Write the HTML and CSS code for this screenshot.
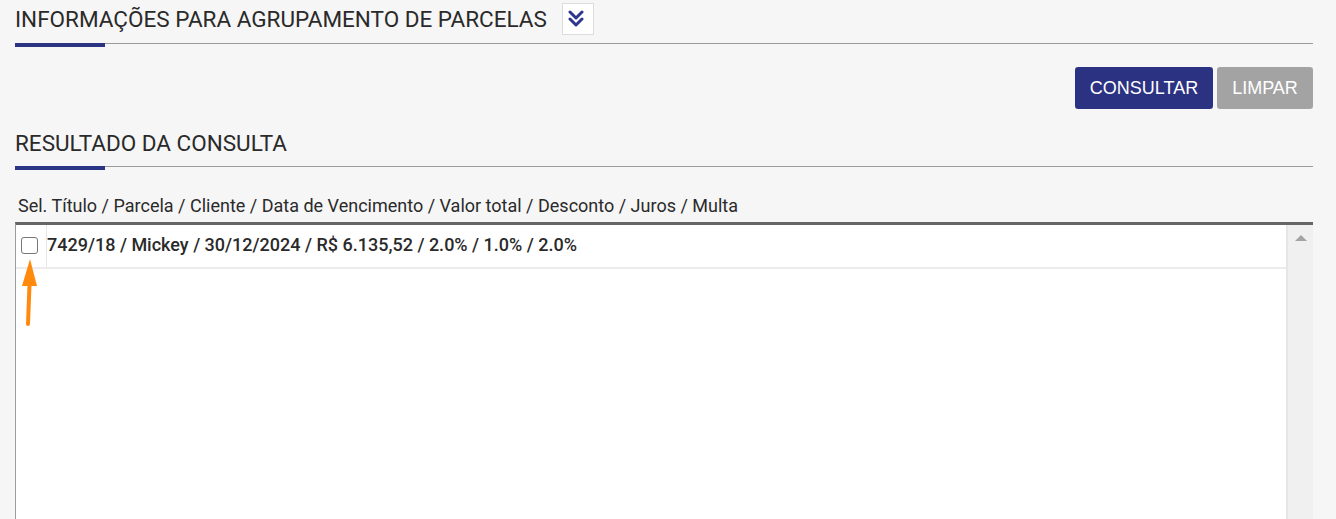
FILE: index.html
```html
<!DOCTYPE html>
<html lang="pt-BR">
<head>
<meta charset="utf-8">
<title>Agrupamento de Parcelas</title>
<link rel="stylesheet" href="styles.css">
</head>
<body>
<div class="page">
  <section class="section">
    <div class="section-head">
      <h2 class="section-title">INFORMAÇÕES PARA AGRUPAMENTO DE PARCELAS</h2>
      <button class="toggle" type="button" aria-label="Expandir">
        <svg width="16" height="18" viewBox="0 0 16 18" fill="none" stroke="#2e3790" stroke-width="3" stroke-linecap="round" stroke-linejoin="round">
          <polyline points="2,2 8,8 14,2"/>
          <polyline points="2,9 8,15 14,9"/>
        </svg>
      </button>
    </div>
    <div class="rule"><span class="rule-accent"></span><span class="rule-line"></span></div>
  </section>

  <div class="actions">
    <button class="btn btn-primary" type="button">CONSULTAR</button>
    <button class="btn btn-disabled" type="button">LIMPAR</button>
  </div>

  <section class="section results">
    <div class="section-head small">
      <h2 class="section-title">RESULTADO DA CONSULTA</h2>
    </div>
    <div class="rule"><span class="rule-accent"></span><span class="rule-line"></span></div>

    <div class="list-label">Sel. Título / Parcela / Cliente / Data de Vencimento / Valor total / Desconto / Juros / Multa</div>
    <div class="list-box">
      <div class="list-rows">
        <div class="row">
          <div class="cell-check"><span class="checkbox"></span></div>
          <div class="cell-text">7429/18 / Mickey / 30/12/2024 / R$ 6.135,52 / 2.0% / 1.0% / 2.0%</div>
        </div>
      </div>
      <div class="scrollbar"><span class="scroll-up"></span></div>
    </div>
    <svg class="pointer" width="20" height="70" viewBox="0 0 20 70">
      <path d="M9.5 26 L8 65" stroke="#ff8a0d" stroke-width="4" stroke-linecap="round" fill="none"/>
      <polygon points="10,0 2,27 17,27" fill="#ff8a0d"/>
    </svg>
  </section>
</div>
</body>
</html>
```

FILE: styles.css
```css
* { box-sizing: border-box; }
html, body { margin: 0; padding: 0; }
body {
  background: #f6f6f6;
  font-family: Roboto, "Liberation Sans", sans-serif;
  color: #333;
  overflow: hidden;
}
.page {
  padding: 3px 23px 0 15px;
}
.section { position: relative; }
.section-head {
  display: flex;
  align-items: center;
  gap: 15px;
  height: 32px;
}
.section-head.small { height: 26px; }
.section-title {
  margin: 0;
  font-size: 22.5px;
  font-weight: 400;
  color: #2a2a2a;
  line-height: 26px;
}
.toggle {
  width: 32px;
  height: 32px;
  padding: 0 0 0 5px;
  margin: 0;
  border: 1px solid #dcdcdc;
  background: #fff;
  display: flex;
  align-items: center;
  justify-content: flex-start;
}
.rule {
  display: flex;
  align-items: flex-start;
  margin-top: 8px;
}
.results .rule { margin-top: 10px; }
.rule-accent {
  width: 90px;
  height: 4px;
  background: #2b3383;
}
.rule-line {
  flex: 1;
  height: 1px;
  background: #9c9c9c;
}
.actions {
  display: flex;
  justify-content: flex-end;
  gap: 4px;
  margin-top: 20px;
}
.btn {
  height: 42px;
  border: none;
  border-radius: 3px;
  color: #fff;
  font-family: "Liberation Sans", Arial, sans-serif;
  font-size: 18px;
  padding: 0;
}
.btn-primary { background: #2b3282; width: 138px; }
.btn-disabled { background: #a3a3a3; width: 96px; }
.results { margin-top: 21px; }
.list-label {
  margin-top: 25px;
  padding-left: 3px;
  font-size: 18px;
  line-height: 22px;
  height: 27px;
  color: #2a2a2a;
}
.list-box {
  display: flex;
  height: 320px;
  border-top: 3px solid #666;
  border-left: 1px solid #9c9c9c;
  background: #fff;
}
.list-rows {
  flex: 1;
  border-right: 2px solid #e6e6e6;
}
.row {
  display: flex;
  height: 44px;
  border-bottom: 2px solid #ececec;
}
.cell-check {
  width: 31px;
  border-right: 1px solid #e6e6e6;
  display: flex;
  align-items: center;
  padding-left: 5px;
  padding-bottom: 2px;
}
.checkbox {
  width: 17px;
  height: 17px;
  border: 1.5px solid #777;
  border-radius: 3px;
  background: #fff;
}
.cell-text {
  display: flex;
  align-items: center;
  padding-left: 0;
  padding-bottom: 3px;
  font-size: 18px;
  font-weight: 500;
  color: #2a2a2a;
}
.scrollbar {
  width: 25px;
  background: #f0f0f0;
  display: flex;
  justify-content: center;
  padding-top: 10px;
}
.scroll-up {
  width: 0;
  height: 0;
  border-left: 6px solid transparent;
  border-right: 6px solid transparent;
  border-bottom: 6px solid #a3a3a3;
}
.pointer {
  position: absolute;
  left: 5px;
  top: 129px;
}
```
